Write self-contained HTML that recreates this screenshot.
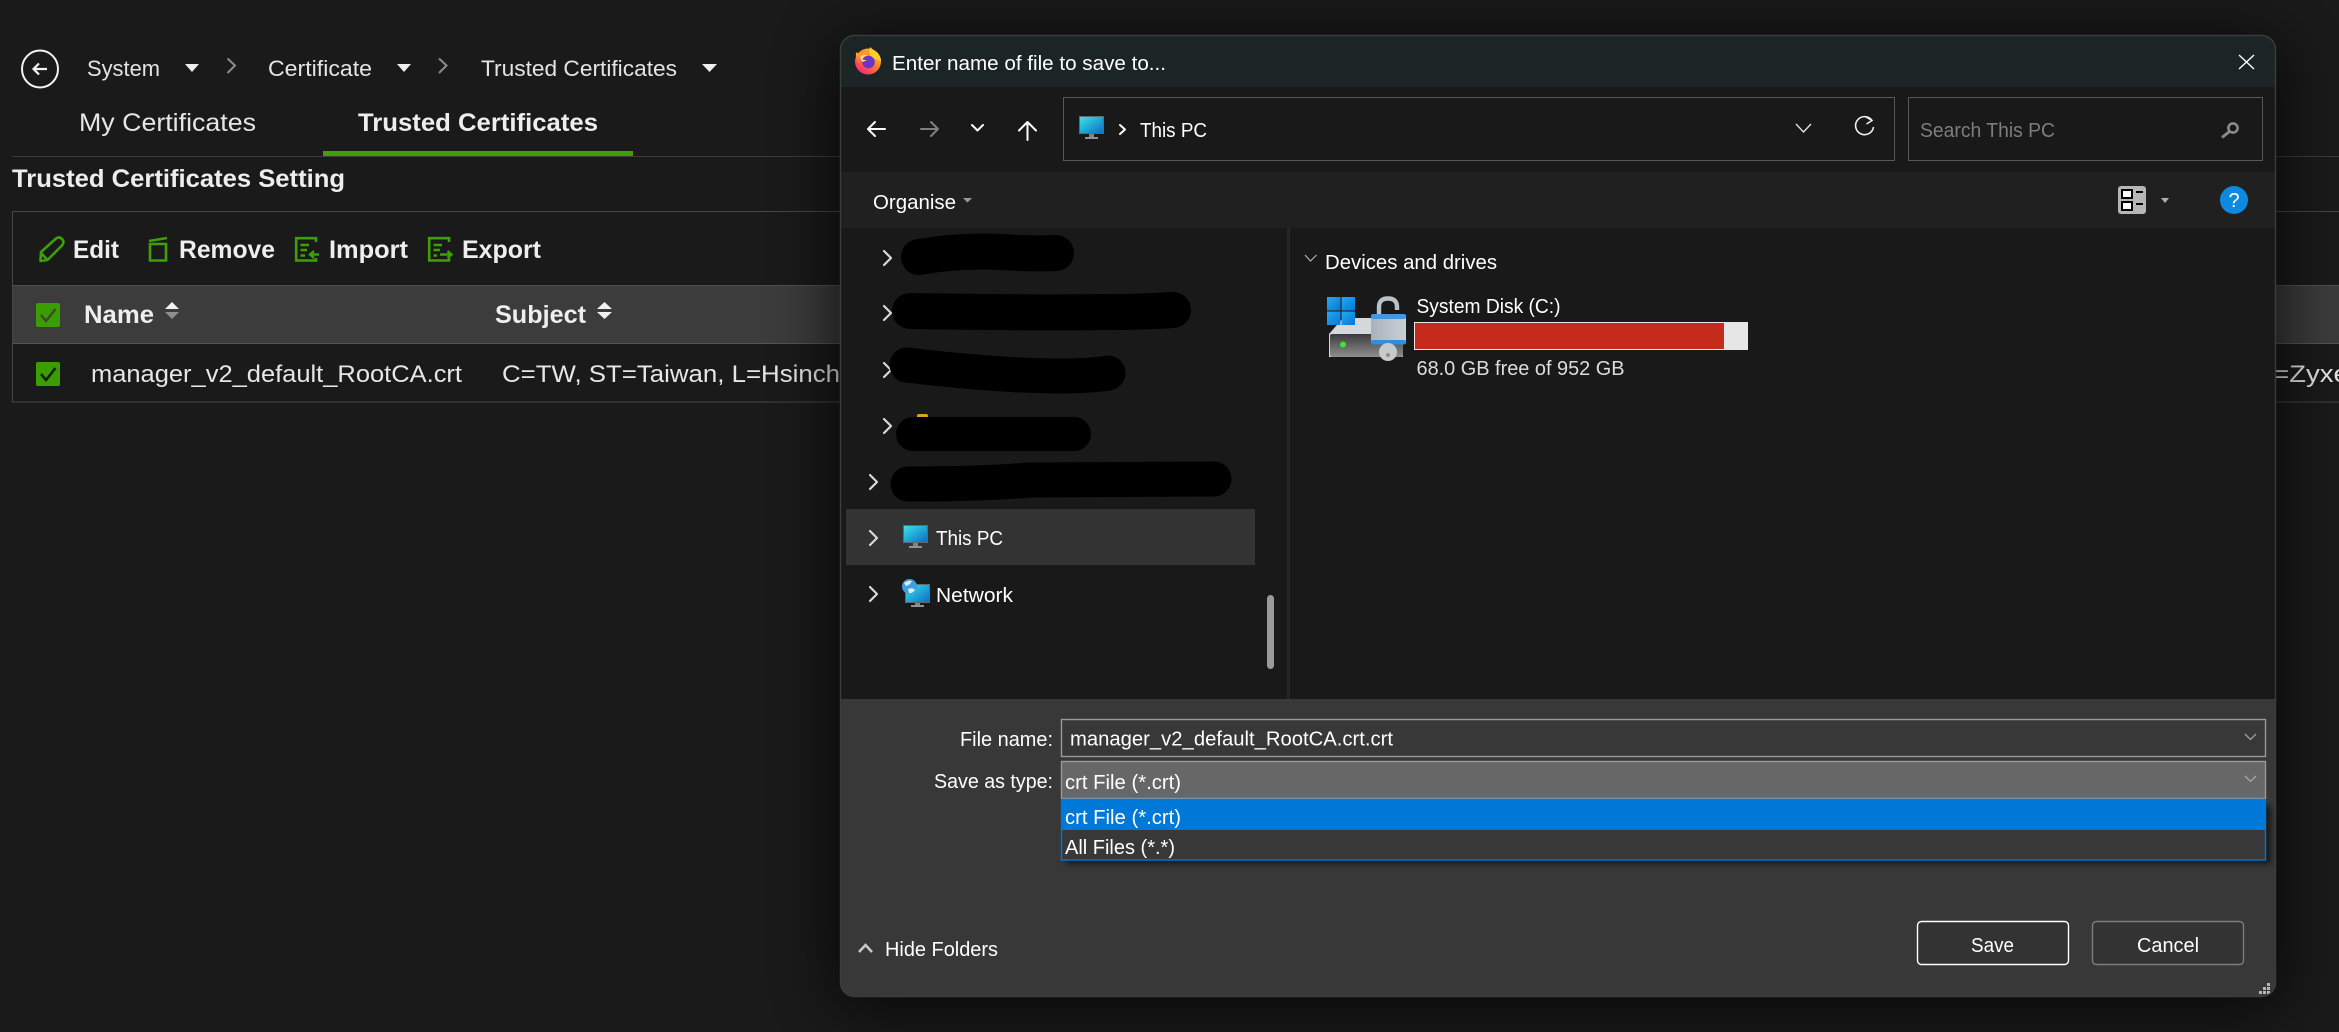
<!DOCTYPE html>
<html lang="en">
<head>
<meta charset="utf-8">
<title>Enter name of file to save to...</title>
<style>
html,body{margin:0;padding:0;background:#1a1a1a;width:2339px;height:1032px;overflow:hidden}
svg{display:block;position:absolute;left:0;top:0}
text{font-family:"Liberation Sans",sans-serif;white-space:pre}
.n{font-size:22px;fill:#e4e4e4}
.b{font-size:25px;font-weight:700;fill:#eeeeee}
.r{font-size:24px;fill:#e6e6e6}
.d{font-size:20px;fill:#ffffff}
.g{stroke:#3f9f05;stroke-width:2.6;fill:none}
.w{fill:none;stroke:#ffffff;stroke-linecap:round;stroke-linejoin:round}
</style>
</head>
<body>
<svg width="2339" height="1032" viewBox="0 0 2339 1032" xmlns="http://www.w3.org/2000/svg">
<defs>
<filter id="sh" x="-20%" y="-30%" width="140%" height="160%"><feGaussianBlur stdDeviation="32"/></filter>
<filter id="sh2" x="-5%" y="-30%" width="110%" height="160%"><feGaussianBlur stdDeviation="3"/></filter>
<clipPath id="dlg"><rect x="840" y="35" width="1436" height="962" rx="14"/></clipPath>
<linearGradient id="scr" x1="0" y1="0" x2="1" y2="1"><stop offset="0" stop-color="#3be0e8"/><stop offset="1" stop-color="#0a70c4"/></linearGradient>
<linearGradient id="ffb" x1="1" y1="0" x2="0.2" y2="1"><stop offset="0" stop-color="#ffd02e"/><stop offset="0.45" stop-color="#ff8a22"/><stop offset="1" stop-color="#ff1f7a"/></linearGradient>
<linearGradient id="ffl" x1="0" y1="0" x2="0" y2="1"><stop offset="0" stop-color="#ffb02a"/><stop offset="1" stop-color="#ff4a3a"/></linearGradient>
<linearGradient id="win" x1="0" y1="0" x2="1" y2="1"><stop offset="0" stop-color="#22aaf0"/><stop offset="1" stop-color="#0678d8"/></linearGradient>
<linearGradient id="drv" x1="0" y1="0" x2="0" y2="1"><stop offset="0" stop-color="#3c3c3c"/><stop offset="1" stop-color="#8f8f8f"/></linearGradient>
<linearGradient id="lock" x1="0" y1="0" x2="1" y2="0"><stop offset="0" stop-color="#a9b3bd"/><stop offset="1" stop-color="#c8ced5"/></linearGradient>
</defs>

<!-- background page -->
<rect width="2339" height="1032" fill="#1a1a1a"/>
<g>
  <ellipse cx="40" cy="69" rx="18" ry="18.5" fill="none" stroke="#f2f2f2" stroke-width="2"/>
  <path d="M33.5 69H47M39 63.5L33.5 69L39 74.5" fill="none" stroke="#f2f2f2" stroke-width="2.2"/>
  <text x="87" y="76" class="n" textLength="73" lengthAdjust="spacingAndGlyphs">System</text>
  <path d="M185 64H199L192 72Z" fill="#eeeeee"/>
  <path d="M227.5 58.5L235 65.5L227.5 73" fill="none" stroke="#8c8c8c" stroke-width="2"/>
  <text x="268" y="76" class="n" textLength="104" lengthAdjust="spacingAndGlyphs">Certificate</text>
  <path d="M397 64H411L404 72Z" fill="#eeeeee"/>
  <path d="M439 58.5L446.5 65.5L439 73" fill="none" stroke="#8c8c8c" stroke-width="2"/>
  <text x="481" y="76" class="n" textLength="196" lengthAdjust="spacingAndGlyphs">Trusted Certificates</text>
  <path d="M702 64H717L709.5 72Z" fill="#eeeeee"/>

  <text x="79" y="131" font-size="25" fill="#e6e6e6" textLength="177" lengthAdjust="spacingAndGlyphs">My Certificates</text>
  <text x="358" y="131" class="b" fill="#f4f4f4" textLength="240" lengthAdjust="spacingAndGlyphs">Trusted Certificates</text>
  <rect x="12" y="156" width="2327" height="1" fill="#3d3d3d"/>
  <rect x="323" y="151" width="310" height="5" fill="#41a007"/>
  <text x="12" y="187" class="b" textLength="333" lengthAdjust="spacingAndGlyphs">Trusted Certificates Setting</text>

  <rect x="12.5" y="211.5" width="2340" height="190.5" fill="none" stroke="#464646" stroke-width="1"/>

  <!-- toolbar -->
  <path class="g" stroke-linejoin="round" d="M41 252L56 238.5Q59.5 236 62.5 239.5Q64.5 242.5 62 245.5L47.5 260L40.5 261ZM41.5 253.5L47 259.5"/>
  <text x="73" y="258" class="b" textLength="46" lengthAdjust="spacingAndGlyphs">Edit</text>
  <path class="g" d="M150 244H166V260.5H150ZM149 241L167 238"/>
  <text x="179" y="258" class="b" textLength="96" lengthAdjust="spacingAndGlyphs">Remove</text>
  <path class="g" d="M316 242V238.2H296.2V260.5H316V258M300.5 245H309M300.5 250H307M300.5 255.5H305"/>
  <path d="M319 254.5H311M314 251L310 254.5L314 258" fill="none" stroke="#3f9f05" stroke-width="2.4"/>
  <text x="329" y="258" class="b" textLength="79" lengthAdjust="spacingAndGlyphs">Import</text>
  <path class="g" d="M449 242V238.2H429.2V260.5H449V258M433.5 245H442M433.5 250H440M433.5 255.5H437"/>
  <path d="M440 254.5H451M447.5 251L451.5 254.5L447.5 258" fill="none" stroke="#3f9f05" stroke-width="2.4"/>
  <text x="462" y="258" class="b" textLength="79" lengthAdjust="spacingAndGlyphs">Export</text>

  <!-- table head -->
  <rect x="13" y="285" width="2326" height="59" fill="#3c3c3c"/>
  <rect x="13" y="285" width="2326" height="1" fill="#4f4f4f"/>
  <rect x="13" y="343" width="2326" height="1" fill="#555555"/>
  <rect x="36" y="303" width="24" height="24" rx="2" fill="#3b9e00"/>
  <path d="M41 315L46 321L55.5 309" fill="none" stroke="#3c4a34" stroke-width="2.4"/>
  <text x="84" y="323" class="b" textLength="70" lengthAdjust="spacingAndGlyphs">Name</text>
  <path d="M172 302L179 309H165Z" fill="#f2f2f2"/>
  <path d="M165 312H179L172 319Z" fill="#8e8e8e"/>
  <text x="495" y="323" class="b" textLength="91" lengthAdjust="spacingAndGlyphs">Subject</text>
  <path d="M604.5 302L612 309H597Z" fill="#f2f2f2"/>
  <path d="M597 312H612L604.5 319Z" fill="#f2f2f2"/>

  <!-- row -->
  <rect x="36" y="362" width="24" height="24" rx="2" fill="#3b9e00"/>
  <path d="M41 374L46 380L55.5 368" fill="none" stroke="#16200f" stroke-width="2.6"/>
  <text x="91" y="382" class="r" textLength="371" lengthAdjust="spacingAndGlyphs">manager_v2_default_RootCA.crt</text>
  <text x="502" y="382" class="r" textLength="338" lengthAdjust="spacingAndGlyphs">C=TW, ST=Taiwan, L=Hsinch</text>
  <text x="2273" y="382" class="r" textLength="82" lengthAdjust="spacingAndGlyphs">=Zyxel</text>
</g>

<!-- dialog shadow -->
<rect x="835" y="42" width="1446" height="965" rx="20" fill="#000" opacity="0.72" filter="url(#sh)"/>

<!-- dialog -->
<g clip-path="url(#dlg)">
  <rect x="840" y="35" width="1436" height="52" fill="#1b2526"/>
  <rect x="840" y="87" width="1436" height="85" fill="#191919"/>
  <rect x="840" y="172" width="1436" height="56" fill="#202020"/>
  <rect x="840" y="228" width="1436" height="471" fill="#191919"/>
  <rect x="840" y="699" width="1436" height="298" fill="#383838"/>

  <!-- firefox icon -->
  <circle cx="868" cy="61.5" r="13" fill="url(#ffb)"/>
  <path d="M870 47Q872 49 875 51Q881 55 881 61L872 58Q868 54 870 47Z" fill="#ffce2e"/>
  <path d="M856 52Q858 54 861 53.5Q864 52 867 53Q863 55 862 57Q858 62 862 67Q855 63 856 52Z" fill="url(#ffl)"/>
  <circle cx="868.5" cy="62" r="6.3" fill="#6a35c8"/>
  <path d="M860 57Q863 54 868 55.5Q863 56 862.5 59.5L867 60.5L862 62Z" fill="#ffd9a0"/>
  <text x="892" y="70" class="d" textLength="274" lengthAdjust="spacingAndGlyphs">Enter name of file to save to...</text>
  <path d="M2239 55L2254 69M2254 55L2239 69" fill="none" stroke="#fff" stroke-width="1.4"/>

  <!-- nav -->
  <path class="w" stroke-width="2" d="M868 129H885M875 122L868 129L875 136"/>
  <path d="M921 129H938M931 122L938 129L931 136" fill="none" stroke="#808080" stroke-width="2" stroke-linecap="round" stroke-linejoin="round"/>
  <path class="w" stroke-width="2" d="M972 125L977.5 130.5L983 125"/>
  <path class="w" stroke-width="2" d="M1027.5 140V122M1019 130.5L1027.5 122L1036 130.5"/>
  <rect x="1063.5" y="97.5" width="831" height="63" fill="#191919" stroke="#575757" stroke-width="1"/>
  <rect x="1908.5" y="97.5" width="354" height="63" fill="#191919" stroke="#575757" stroke-width="1"/>
  <!-- monitor -->
  <rect x="1079" y="116" width="25" height="18" fill="#5c6b72"/>
  <rect x="1080" y="117" width="23" height="16" fill="url(#scr)"/>
  <rect x="1089" y="134" width="5" height="3" fill="#7b858a"/>
  <rect x="1085" y="137" width="13" height="2" fill="#8c9498"/>
  <path class="w" stroke-width="2" d="M1120 125L1125 129.5L1120 134"/>
  <text x="1140" y="137" class="d" textLength="67" lengthAdjust="spacingAndGlyphs">This PC</text>
  <path d="M1796 124L1803.5 132L1811 124" fill="none" stroke="#e8e8e8" stroke-width="1.3"/>
  <path d="M1872 120.5A9 9 0 1 0 1873.5 127" fill="none" stroke="#f0f0f0" stroke-width="1.6"/>
  <path d="M1866 117L1872 120.5L1866.5 124" fill="none" stroke="#f0f0f0" stroke-width="1.4"/>
  <text x="1920" y="137" font-size="20" fill="#7d7d7d" textLength="135" lengthAdjust="spacingAndGlyphs">Search This PC</text>
  <circle cx="2233" cy="128" r="4.6" fill="none" stroke="#8a8a8a" stroke-width="2.6"/>
  <path d="M2229.5 131.5L2222 137.5" stroke="#8a8a8a" stroke-width="3" fill="none"/>

  <!-- organise -->
  <text x="873" y="209" class="d" textLength="83" lengthAdjust="spacingAndGlyphs">Organise</text>
  <path d="M963 198H972L967.5 202.5Z" fill="#9a9a9a"/>
  <rect x="2118" y="186" width="28" height="28" rx="3" fill="#b6b6b6"/>
  <rect x="2122" y="190" width="10" height="8" fill="#fff" stroke="#000" stroke-width="2"/>
  <rect x="2122" y="202" width="10" height="8" fill="#fff" stroke="#000" stroke-width="2"/>
  <rect x="2136" y="191" width="7" height="2" fill="#000"/>
  <rect x="2136" y="203" width="7" height="2" fill="#000"/>
  <path d="M2161 198H2169L2165 203Z" fill="#b0b0b0"/>
  <circle cx="2234" cy="200" r="14" fill="#0d8ae0"/>
  <text x="2234" y="207" font-size="20" fill="#fff" text-anchor="middle">?</text>

  <!-- sidebar -->
  <rect x="1287" y="228" width="3" height="471" fill="#262626"/>
  <rect x="846" y="509" width="409" height="56" fill="#333333"/>
  <g fill="none" stroke="#d8d8d8" stroke-width="2.2" stroke-linejoin="round" stroke-linecap="round">
    <path d="M884 251L891 258L884 265"/>
    <path d="M884 306L891 313L884 320"/>
    <path d="M884 363L891 370L884 377"/>
    <path d="M884 419L891 426L884 433"/>
    <path d="M870 475L877 482L870 489"/>
    <path d="M870 531L877 538L870 545"/>
    <path d="M870 587L877 594L870 601"/>
  </g>
  <rect x="917" y="414" width="11" height="6" rx="2" fill="#e0a020"/>
  <g fill="none" stroke="#000" stroke-linecap="round" stroke-linejoin="round">
    <path stroke-width="36" d="M919 257Q960 250 1000 252Q1030 254 1056 253"/>
    <path stroke-width="36" d="M910 311Q1040 313 1110 312Q1140 312 1173 310"/>
    <path stroke-width="35" d="M907 365Q1000 376 1060 376Q1090 376 1108 373"/>
    <path stroke-width="34" d="M913 434H1074"/>
    <path stroke-width="35" d="M908 484Q980 484 1030 480L1214 479"/>
  </g>
  <!-- this pc -->
  <rect x="903" y="525" width="25" height="18" fill="#5c6b72"/>
  <rect x="904" y="526" width="23" height="16" fill="url(#scr)"/>
  <rect x="913" y="543" width="5" height="3" fill="#7b858a"/>
  <rect x="909" y="546" width="13" height="2" fill="#8c9498"/>
  <text x="936" y="545" class="d" textLength="67" lengthAdjust="spacingAndGlyphs">This PC</text>
  <!-- network -->
  <rect x="905" y="584" width="25" height="19" fill="#5c6b72"/>
  <rect x="906" y="585" width="23" height="17" fill="url(#scr)"/>
  <rect x="915" y="603" width="5" height="2" fill="#7b858a"/>
  <rect x="911" y="605" width="13" height="2" fill="#8c9498"/>
  <circle cx="909.5" cy="586.5" r="7.5" fill="#3f9fe0"/>
  <path d="M904 583Q908 580 912 581Q910 585 906 586ZM908 589Q913 587 915 590Q912 594 909 593Z" fill="#d8eef8"/>
  <text x="936" y="602" class="d" textLength="77" lengthAdjust="spacingAndGlyphs">Network</text>
  <rect x="1267" y="595" width="7" height="74" rx="3.5" fill="#9a9a9a"/>

  <!-- devices -->
  <path d="M1305 255L1310.5 261L1316.5 255" fill="none" stroke="#b0b0b0" stroke-width="1.2"/>
  <text x="1325" y="269" class="d" textLength="172" lengthAdjust="spacingAndGlyphs">Devices and drives</text>
  <!-- drive -->
  <path d="M1343 318H1392L1403 334V357H1329V334Z" fill="#d4d7db"/>
  <rect x="1330" y="334" width="73" height="23" rx="2" fill="url(#drv)"/>
  <circle cx="1343" cy="344.5" r="3" fill="#37e62f"/>
  <rect x="1327" y="297" width="13.5" height="13.5" fill="url(#win)"/>
  <rect x="1341.5" y="297" width="13.5" height="13.5" fill="url(#win)"/>
  <rect x="1327" y="311.5" width="13.5" height="13.5" fill="url(#win)"/>
  <rect x="1341.5" y="311.5" width="13.5" height="13.5" fill="url(#win)"/>
  <path d="M1379 316V307Q1379 298.5 1388 298.5Q1397 298.5 1397 307V310" fill="none" stroke="#b9c1c9" stroke-width="4.4"/>
  <rect x="1371" y="314" width="35" height="30" rx="2.5" fill="url(#lock)"/>
  <rect x="1371" y="314" width="35" height="5" rx="2" fill="#4596dc"/>
  <rect x="1371" y="340" width="35" height="4.5" rx="2" fill="#2f8ee0"/>
  <circle cx="1388" cy="352" r="9" fill="#c6cacd"/>
  <circle cx="1388" cy="355" r="2" fill="#8b8f92"/>
  <text x="1416.5" y="313" class="d" textLength="144" lengthAdjust="spacingAndGlyphs">System Disk (C:)</text>
  <rect x="1414" y="322" width="334" height="28" fill="#e6e6e6"/>
  <rect x="1415" y="323" width="309" height="26" fill="#c42b1c"/>
  <text x="1416.5" y="375" class="d" textLength="208" lengthAdjust="spacingAndGlyphs" style="fill:#dcdcdc">68.0 GB free of 952 GB</text>

  <!-- bottom -->
  <text x="960" y="746" class="d" textLength="93" lengthAdjust="spacingAndGlyphs">File name:</text>
  <rect x="1061.5" y="719.5" width="1204" height="37" fill="#383838" stroke="#9a9a9a" stroke-width="1.4"/>
  <text x="1070" y="745.5" class="d" textLength="323" lengthAdjust="spacingAndGlyphs">manager_v2_default_RootCA.crt.crt</text>
  <path d="M2245 734L2250.5 739.5L2256 734" fill="none" stroke="#a0a0a0" stroke-width="1.3"/>
  <text x="934" y="788" class="d" textLength="119" lengthAdjust="spacingAndGlyphs">Save as type:</text>
  <rect x="1061.5" y="761.5" width="1204" height="37" fill="#676767" stroke="#9a9a9a" stroke-width="1.4"/>
  <text x="1065" y="789" class="d" textLength="116" lengthAdjust="spacingAndGlyphs">crt File (*.crt)</text>
  <path d="M2245 776L2250.5 781.5L2256 776" fill="none" stroke="#a8a8a8" stroke-width="1.3"/>
  <rect x="1066" y="806" width="1205" height="58" fill="#000" opacity="0.55" filter="url(#sh2)"/>
  <rect x="1061.5" y="799.5" width="1204" height="60.5" fill="#383838" stroke="#0078d7" stroke-width="1.4"/>
  <rect x="1061" y="799" width="1205" height="31" fill="#0078d7"/>
  <text x="1065" y="824" class="d" textLength="116" lengthAdjust="spacingAndGlyphs">crt File (*.crt)</text>
  <text x="1065" y="854" class="d" textLength="110" lengthAdjust="spacingAndGlyphs">All Files (*.*)</text>

  <path d="M859 952L865.5 945L872 952" fill="none" stroke="#c8c8c8" stroke-width="2.6"/>
  <text x="885" y="956" class="d" textLength="113" lengthAdjust="spacingAndGlyphs">Hide Folders</text>

  <rect x="1917.5" y="921.5" width="151" height="43" rx="4" fill="#333333" stroke="#ffffff" stroke-width="1.4"/>
  <text x="1971" y="952" class="d" textLength="43" lengthAdjust="spacingAndGlyphs">Save</text>
  <rect x="2092.5" y="921.5" width="151" height="43" rx="4" fill="#333333" stroke="#7d7d7d" stroke-width="1.4"/>
  <text x="2137" y="952" class="d" textLength="62" lengthAdjust="spacingAndGlyphs">Cancel</text>

  <g fill="#b5b5b5">
    <rect x="2267" y="983" width="3" height="3"/>
    <rect x="2263" y="987" width="3" height="3"/><rect x="2267" y="987" width="3" height="3"/>
    <rect x="2259" y="991" width="3" height="3"/><rect x="2263" y="991" width="3" height="3"/><rect x="2267" y="991" width="3" height="3"/>
  </g>
</g>
<rect x="840.5" y="35.5" width="1435" height="961" rx="14" fill="none" stroke="#3c3c3c" stroke-width="1.4"/>
</svg>
</body>
</html>
